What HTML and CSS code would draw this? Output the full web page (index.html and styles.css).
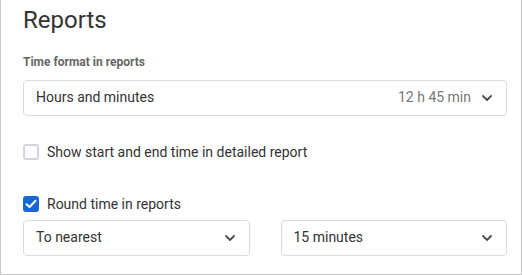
FILE: index.html
```html
<!DOCTYPE html>
<html>
<head>
<meta charset="utf-8">
<link rel="stylesheet" href="styles.css">
</head>
<body>
<div class="panel">
  <h1 class="title">Reports</h1>
  <div class="field-label">Time format in reports</div>
  <div class="select">
    <span class="select-text">Hours and minutes</span>
    <span class="select-right">
      <span class="select-hint">12 h 45 min</span>
      <svg class="chev" width="10" height="6" viewBox="0 0 10 6"><path d="M1 1 L5 5 L9 1" fill="none" stroke="#4a4f57" stroke-width="1.8" stroke-linecap="round" stroke-linejoin="round"/></svg>
    </span>
  </div>
  <label class="check-row first">
    <span class="box"></span>
    <span class="check-text">Show start and end time in detailed report</span>
  </label>
  <label class="check-row second">
    <span class="box checked"><svg width="12" height="10" viewBox="0 0 12 10"><path d="M1.5 5.2 L4.6 8 L10.5 1.8" fill="none" stroke="#fff" stroke-width="2" stroke-linecap="round" stroke-linejoin="round"/></svg></span>
    <span class="check-text">Round time in reports</span>
  </label>
  <div class="select-pair">
    <div class="select">
      <span class="select-text">To nearest</span>
      <svg class="chev" width="10" height="6" viewBox="0 0 10 6"><path d="M1 1 L5 5 L9 1" fill="none" stroke="#4a4f57" stroke-width="1.8" stroke-linecap="round" stroke-linejoin="round"/></svg>
    </div>
    <div class="select">
      <span class="select-text">15 minutes</span>
      <svg class="chev" width="10" height="6" viewBox="0 0 10 6"><path d="M1 1 L5 5 L9 1" fill="none" stroke="#4a4f57" stroke-width="1.8" stroke-linecap="round" stroke-linejoin="round"/></svg>
    </div>
  </div>
</div>
</body>
</html>
```

FILE: styles.css
```css
html, body {
  margin: 0;
  padding: 0;
  background: #fff;
}
body {
  font-family: Roboto, "Liberation Sans", sans-serif;
  color: #333;
}
.panel {
  box-sizing: border-box;
  width: 522px;
  height: 275px;
  border: 1px solid #c6c6c6;
  border-top: 0;
  padding: 0 14px 0 22px;
  display: flex;
  flex-direction: column;
}
.title {
  margin: 6px 0 0;
  font-size: 24px;
  line-height: 28px;
  font-weight: 400;
  color: #333;
}
.field-label {
  margin-top: 20px;
  font-size: 12px;
  line-height: 16px;
  font-weight: 700;
  color: #666;
}
.select {
  box-sizing: border-box;
  height: 36px;
  margin-top: 10px;
  border: 1px solid #d9dbdf;
  border-radius: 4px;
  display: flex;
  align-items: center;
  justify-content: space-between;
  padding: 0 14px 2px 12px;
  font-size: 14px;
  line-height: 18px;
  color: #333;
}
.select-right {
  display: flex;
  align-items: center;
  gap: 11px;
}
.select-hint {
  color: #777;
}
.chev {
  display: block;
  margin-top: 2px;
}
.check-row {
  display: flex;
  align-items: center;
  height: 20px;
  gap: 8px;
  font-size: 14px;
  color: #333;
}
.check-row.first {
  margin-top: 26px;
}
.check-row.second {
  margin-top: 32px;
}
.box {
  box-sizing: border-box;
  width: 16px;
  height: 16px;
  border: 2px solid #d3d6db;
  border-radius: 3px;
  display: flex;
  align-items: center;
  justify-content: center;
  flex: none;
}
.box.checked {
  background: #1668d6;
  border-color: #1668d6;
}
.box.checked svg {
  display: block;
}
.check-text {
  line-height: 18px;
  padding-bottom: 1px;
}
.select-pair {
  margin-top: 6px;
  display: grid;
  grid-template-columns: 1fr 1fr;
  column-gap: 31px;
}
.select-pair .select {
  margin-top: 0;
}
```
